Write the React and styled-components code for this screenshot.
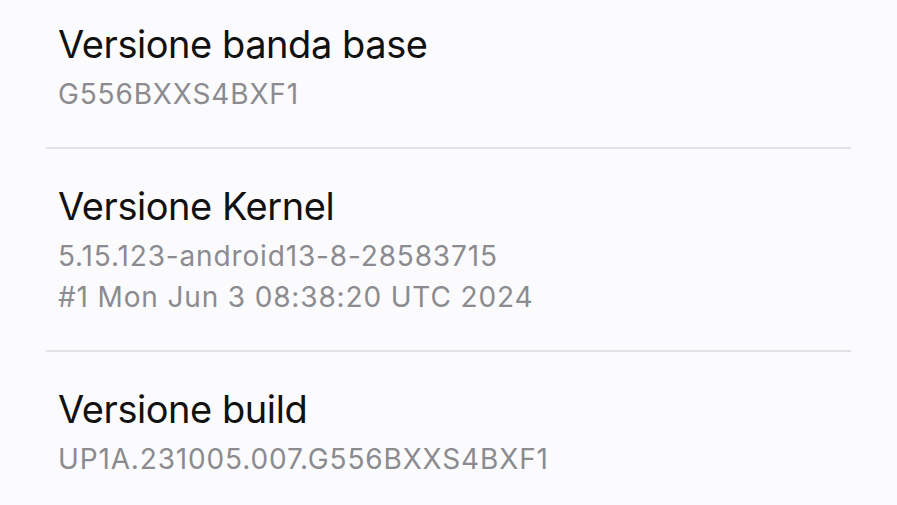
import React from 'react';
import styled, {createGlobalStyle} from 'styled-components';

const Global = createGlobalStyle`
  html, body {
    margin: 0;
    padding: 0;
    background: #fbfbfd;
  }
  body {
    font-family: Inter, Roboto, "Noto Sans", sans-serif;
    -webkit-font-smoothing: antialiased;
  }
`;

const List = styled.div`
  width: 805px;
  margin-left: 46px;
  display: flex;
  flex-direction: column;
`;

const Item = styled.div`
  display: flex;
  flex-direction: column;
  gap: 7px;
  padding: ${p => (p.$first ? '22px' : '35px')} 12px 32px;
  border-bottom: ${p => (p.$last ? 'none' : '2px solid #e3e3e7')};
`;

const Title = styled.div`
  font-size: 38px;
  line-height: 45px;
  color: #111111;
  letter-spacing: -0.45px;
`;

const Sub = styled.div`
  font-size: 28px;
  line-height: 41px;
  color: #8b8b90;
  letter-spacing: 0.85px;
`;

const items = [
  {title: 'Versione banda base', lines: ['G556BXXS4BXF1']},
  {title: 'Versione Kernel', lines: ['5.15.123-android13-8-28583715', '#1 Mon Jun 3 08:38:20 UTC 2024']},
  {title: 'Versione build', lines: ['UP1A.231005.007.G556BXXS4BXF1']},
];

export default function App() {
  return (
      <>
        <Global/>
        <List>
          {items.map((it, i) => (
              <Item key={it.title} $first={i === 0} $last={i === items.length - 1}>
                <Title>{it.title}</Title>
                <div>
                  {it.lines.map(l => <Sub key={l}>{l}</Sub>)}
                </div>
              </Item>
          ))}
        </List>
      </>
  );
}
